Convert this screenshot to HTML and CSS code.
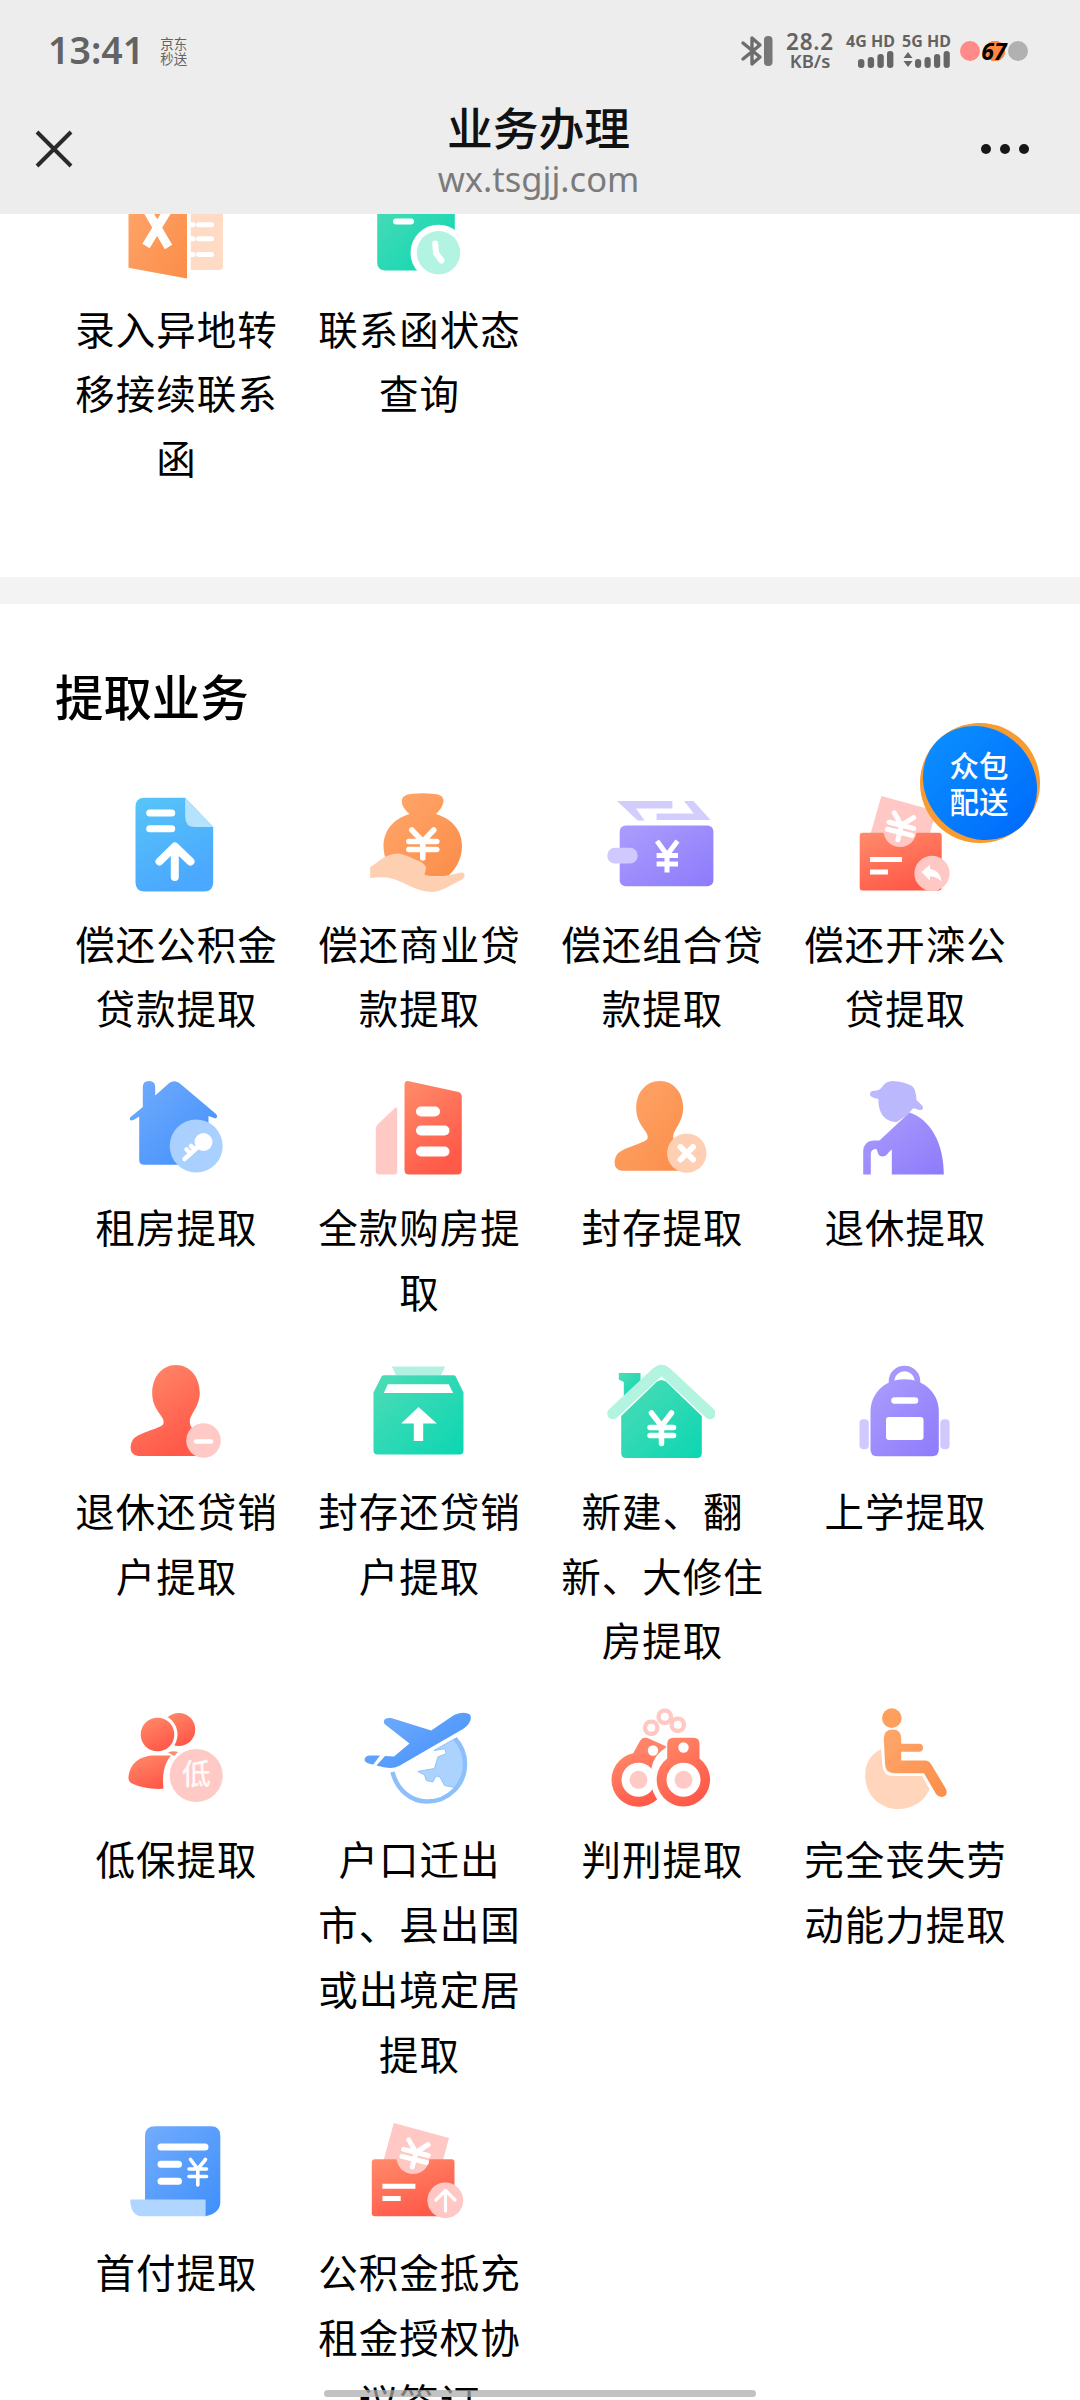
FILE: index.html
```html
<!DOCTYPE html>
<html lang="zh-CN">
<head>
  <meta charset="UTF-8">
  <meta name="viewport" content="width=device-width, initial-scale=1.0">
  <title>业务办理</title>
  <link rel="stylesheet" href="styles.css">
</head>
<body>
  <!-- 公共渐变和符号 -->
  <svg class="defs" width="0" height="0">
    <defs>
      <linearGradient id="orange" x1="0" y1="0" x2="1" y2="1"><stop offset="0" stop-color="#ffa76c"/><stop offset="1" stop-color="#fb8d49"/></linearGradient>
      <linearGradient id="green" x1="0" y1="0" x2="1" y2="1"><stop offset="0" stop-color="#4edcb6"/><stop offset="1" stop-color="#0bd6b2"/></linearGradient>
      <linearGradient id="sky" x1="0" y1="0" x2="0.4" y2="1"><stop offset="0" stop-color="#57c5f7"/><stop offset="1" stop-color="#4ba8ff"/></linearGradient>
      <linearGradient id="blue" x1="0" y1="0" x2="1" y2="1"><stop offset="0" stop-color="#72acfd"/><stop offset="1" stop-color="#3f8ffb"/></linearGradient>
      <linearGradient id="purple" x1="0" y1="0" x2="1" y2="1"><stop offset="0" stop-color="#aa9dfd"/><stop offset="1" stop-color="#8d7bfb"/></linearGradient>
      <linearGradient id="red" x1="0" y1="0" x2="0.5" y2="1"><stop offset="0" stop-color="#ff8c6c"/><stop offset="1" stop-color="#ff5a49"/></linearGradient>
      <symbol id="yen" viewBox="0 0 32 36" overflow="visible">
        <path d="M5 4 L16 15.5 L27 4 M16 15.5 V32 M2 15.5 H30 M2 23.5 H30" fill="none" stroke="#fff" stroke-width="5.500" stroke-linecap="round"/>
      </symbol>
    </defs>
  </svg>

  <header class="header">
    <div class="status-bar">
      <div class="status-left">
        <span class="time">13:41</span>
        <span class="notice">京东<br>秒送</span>
      </div>
      <div class="status-right">
        <svg class="bluetooth" width="34" height="34" viewBox="0 0 34 34">
          <path d="M3 9 L20 23 L12 30 V4 L20 11 L3 25" fill="none" stroke="#6d6d6d" stroke-width="3.400" stroke-linejoin="round" stroke-linecap="round"/>
          <rect x="24" y="2" width="8.500" height="30" rx="4" fill="#777"/>
        </svg>
        <div class="speed"><b>28.2</b><span>KB/s</span></div>
        <div class="signal">
          <span>4G HD</span>
          <svg width="48" height="17" viewBox="0 0 48 17" fill="#666">
            <rect x="12" y="8" width="6.400" height="9" rx="3"/><rect x="21.700" y="6" width="6.400" height="11" rx="3"/><rect x="31.400" y="3" width="6.400" height="14" rx="3"/><rect x="41" y="0" width="6.400" height="17" rx="3"/>
          </svg>
        </div>
        <div class="signal">
          <span>5G HD</span>
          <svg width="48" height="17" viewBox="0 0 48 17" fill="#666">
            <path d="M1.500 7 L6 1 L10.500 7 Z M1.500 10 L6 16 L10.500 10 Z"/>
            <rect x="13" y="8" width="6.200" height="9" rx="3"/><rect x="22.500" y="6" width="6.200" height="11" rx="3"/><rect x="32" y="3" width="6.200" height="14" rx="3"/><rect x="41.600" y="0" width="6.200" height="17" rx="3"/>
          </svg>
        </div>
        <div class="battery"><i class="dot-red"></i><span class="level">67</span><i class="dot-gray"></i></div>
      </div>
    </div>
    <div class="nav-bar">
      <svg class="close" width="38" height="38" viewBox="0 0 38 38"><path d="M2 2 L36 36 M36 2 L2 36" stroke="#2a2a2a" stroke-width="4"/></svg>
      <div class="nav-title">
        <h1>业务办理</h1>
        <p>wx.tsgjj.com</p>
      </div>
      <svg class="more" width="50" height="12" viewBox="0 0 50 12" fill="#171717"><circle cx="6" cy="6" r="5"/><circle cx="25" cy="6" r="5"/><circle cx="44" cy="6" r="5"/></svg>
    </div>
  </header>

  <main class="page">
    <section class="section transfer">
      <div class="grid">
        <a class="item">
          <svg class="icon" viewBox="0 0 108 108">
            <path d="M69.800 10 H98 Q102 10 102 14 V89 Q102 93 98 93 H69.800 Z" fill="#ffdac5"/>
            <path d="M69 47.700 h3 M77.500 47.700 h13 M69 61.700 h3 M77.500 61.700 h13 M69 77.400 h3 M77.500 77.400 h13" stroke="#fff" stroke-width="5" stroke-linecap="round"/>
            <path d="M7.500 14 L66 3 V101.500 L7.500 90.700 Z" fill="url(#orange)"/>
            <path d="M23 28 L47.500 70 M50 28 L25 69" stroke="#fff" stroke-width="8.500"/>
          </svg>
          <span class="label">录入异地转移接续联系函</span>
        </a>
        <a class="item">
          <svg class="icon" viewBox="0 0 108 108">
            <rect x="13.200" y="12" width="77.600" height="81.400" rx="7" fill="url(#green)"/>
            <path d="M32 44.400 H47" stroke="#fff" stroke-width="6" stroke-linecap="round"/>
            <circle cx="74.500" cy="75.700" r="28" fill="#fff"/>
            <circle cx="74.500" cy="75.700" r="21.700" fill="#b3f3e2"/>
            <path d="M71.200 66.500 L72 76 L77.500 83.500" fill="none" stroke="#fff" stroke-width="6" stroke-linecap="round" stroke-linejoin="round"/>
          </svg>
          <span class="label">联系函状态查询</span>
        </a>
      </div>
    </section>

    <section class="section withdraw">
      <h2>提取业务</h2>
      <div class="grid">
        <a class="item">
          <svg class="icon" viewBox="0 0 108 108">
            <path d="M23.500 5.700 H64.200 L92.200 35 V90.400 Q92.200 99.400 83.200 99.400 H23.500 Q14.500 99.400 14.500 90.400 V14.700 Q14.500 5.700 23.500 5.700 Z" fill="url(#sky)"/>
            <path d="M64.200 5.700 L92.200 35 H74 Q64.200 35 64.200 25 Z" fill="#b5e2fd"/>
            <path d="M28.700 21.100 H50.700 M28.700 36.700 H50.700" stroke="#fff" stroke-width="7" stroke-linecap="round"/>
            <path d="M53.800 85 V55 M38.500 69.500 L53.800 54.500 L69.500 69.500" fill="none" stroke="#fff" stroke-width="8" stroke-linecap="round" stroke-linejoin="round"/>
          </svg>
          <span class="label">偿还公积金贷款提取</span>
        </a>
        <a class="item">
          <svg class="icon" viewBox="0 0 108 108">
            <path d="M45.500 22 C40 17 37.800 13 37.800 9.500 C38 4 42 2.500 47 2 Q58.800 0.500 70 2 C76 2.500 79.500 4 79.500 9.500 C79 14 76 18 72 22 C88 27 98 38 98 54 C98 67 92 77 84 84 H38 C25 78 19.500 66 19.500 54 C19.500 39 29 27 45.500 22 Z" fill="url(#orange)"/>
            <path d="M6.200 75 C15 70 20 62 34 61.400 C42 62 49 67 55.500 69 C61 72 63 75 61.500 78 L60.500 83 C75 86 88 83 97 80.500 Q101 80 100.500 84 Q100 87 95 89 C85 94 77 100 67 100 C50 99 38 88 25.500 86 C18 84.500 12 86 6.200 86 Z" fill="#ffcfb2"/>
            <use href="#yen" x="42.800" y="34" width="32" height="36"/>
          </svg>
          <span class="label">偿还商业贷款提取</span>
        </a>
        <a class="item">
          <svg class="icon" viewBox="0 0 108 108">
            <path d="M10 9 H65.400 V16.400 H29 L37.500 28.400 H30.600 Z M77.100 9 H86.400 L103.600 28 H49.600 V21.400 H86.800 Z" fill="#d3cdfe"/>
            <rect x="12.700" y="33.400" width="93.700" height="60.800" rx="6" fill="url(#purple)"/>
            <rect x="0.300" y="55.700" width="30.300" height="15.700" rx="7.500" fill="#cfc9fe"/>
            <path d="M50 49 L60 63 L70.500 49 M60 62 V80.500 M49.600 63.500 H71 M49.600 72 H71" fill="none" stroke="#fff" stroke-width="5"/>
          </svg>
          <span class="label">偿还组合贷款提取</span>
        </a>
        <a class="item">
          <svg class="icon" viewBox="0 0 108 108">
            <path d="M31.400 4 L86 19 L80 41 H20.700 Z" fill="#ffc8c4"/>
            <rect x="9.700" y="40.700" width="82" height="57.700" rx="3" fill="url(#red)"/>
            <circle cx="50" cy="38.500" r="16.500" fill="#ffc8c4"/>
            <use href="#yen" x="36.500" y="19" width="29" height="33" transform="rotate(14 51 35)"/>
            <path d="M20 67.500 H52 M20 80 H38" stroke="#fff" stroke-width="5"/>
            <circle cx="82" cy="81.400" r="17.600" fill="#ffc8c4"/>
            <path d="M71.500 80 L80 72.500 V77 C87 78 90.500 82 91.500 89.500 C88 86 85 84.500 80 84.500 V88.500 Z" fill="#fff"/>
          </svg>
          <span class="label">偿还开滦公贷提取</span>
        </a>

        <a class="item">
          <svg class="icon" viewBox="0 0 108 108">
            <path d="M21.800 12 Q21.800 6 28 6 Q34.200 6 34.200 12 V20.500 L48.500 7.800 Q53.200 4.500 58 7.800 L95 39 Q97.500 42 94.500 43.500 L87.500 41 V89.800 H23 Q18.200 89.800 18.200 85 V41.500 L12.500 45 Q8 46.500 9 42.500 L21.800 32 Z" fill="url(#blue)"/>
            <circle cx="75.200" cy="71.100" r="26.500" fill="#a9d0fe"/>
            <circle cx="82.500" cy="67" r="9" fill="#fff"/>
            <path d="M78 71 L63.500 84 M69.500 78.500 L65.500 74.500 M74 74.500 L70 71" stroke="#fff" stroke-width="4.500" stroke-linecap="round"/>
          </svg>
          <span class="label">租房提取</span>
        </a>
        <a class="item">
          <svg class="icon" viewBox="0 0 108 108">
            <path d="M13 50 L31 33 Q33.200 31 33.200 34 V97 Q33.200 99.500 30.500 99.500 H15 Q11.800 99.500 11.800 96 V53 Z" fill="#ffcac5"/>
            <path d="M40.500 10 Q40.500 5 45 6.200 L94.500 17 Q97.800 18 97.800 22 V95 Q97.800 99.500 93.500 99.500 H45 Q40.500 99.500 40.500 95 Z" fill="url(#red)"/>
            <path d="M57 36.500 H71 M57 55.500 H80.500 M57 76.500 H80.500" stroke="#fff" stroke-width="10" stroke-linecap="round"/>
          </svg>
          <span class="label">全款购房提取</span>
        </a>
        <a class="item">
          <svg class="icon" viewBox="0 0 108 108">
            <path d="M52.800 6 C67 6 76.200 18 76.200 33 C76.200 44 70 51 66.500 59 C65 66 69 69 75 72 V95.800 H15 Q7.500 95 7.500 87 Q8 79 15 75.500 C24 71 33 69 39.800 64.800 C41 63 41 61 39.500 58 C34 50 29.200 44 29.200 33 C29.200 18 38.500 6 52.800 6 Z" fill="url(#orange)"/>
            <circle cx="79.800" cy="78.100" r="19.700" fill="#ffcfb4"/>
            <path d="M73.500 72 L86 84.500 M86 72 L73.500 84.500" stroke="#fff" stroke-width="6" stroke-linecap="round"/>
          </svg>
          <span class="label">封存提取</span>
        </a>
        <a class="item">
          <svg class="icon" viewBox="0 0 108 108">
            <path d="M20 19 Q20 16 24 15.800 Q30 15.500 32 12 Q36 6 42 6 Q54 6.500 62 11 Q66 14 66.500 25 L72.500 31 Q74.500 35.500 69 35 Q66 33 63 33.500 L57 40 L47 47 C34 47 28 37 28.500 24 Q19 22 20 19 Z" fill="#bcb8fe"/>
            <path d="M59.500 37.500 C80 44 94 68 93.800 99.500 H41.800 V74.500 C38 77 37 81.500 32.500 81.500 C28 81.500 28 77 26.500 74 Q20.800 74 20.800 79 V99.500 H13.200 V76 Q13.500 66 24 65.500 H29.500 Z" fill="url(#purple)"/>
          </svg>
          <span class="label">退休提取</span>
        </a>

        <a class="item">
          <svg class="icon" viewBox="0 0 108 108">
            <path d="M54.900 6 C69 6 78.800 18 78.800 34 C78.800 45 72 52 69 60 C68 67 71 70 77 73 V97 H17 Q9.500 96 9.500 88 Q10 80 17 76.500 C26 72 35 70 41.800 66 C43 64 43 62 41.500 59 C36 51 31.200 45 31.200 34 C31.200 18 41 6 54.900 6 Z" fill="url(#red)"/>
            <circle cx="82.500" cy="81.500" r="17.300" fill="#ffcac6"/>
            <path d="M75 82.500 H90" stroke="#fff" stroke-width="4.500" stroke-linecap="round"/>
          </svg>
          <span class="label">退休还贷销户提取</span>
        </a>
        <a class="item">
          <svg class="icon" viewBox="0 0 108 108">
            <path d="M27.800 7.500 H81.200 L77 16.200 H32 Z" fill="#b2f1e1"/>
            <path d="M20 16.200 H89.500 Q91 16.200 91.700 17.500 L99.500 33.500 V91.500 Q99.500 95.500 95.500 95.500 H13.500 Q9.500 95.500 9.500 91.500 V33.500 L17.500 17.500 Q18.500 16.200 20 16.200 Z" fill="url(#green)"/>
            <path d="M23.800 25.200 H84.800 L89.200 33.900 H19.800 Z M54.500 47.900 L72.800 64.500 H59.200 V82 H49.800 V64.500 H37.200 Z" fill="#fff"/>
          </svg>
          <span class="label">封存还贷销户提取</span>
        </a>
        <a class="item">
          <svg class="icon" viewBox="0 0 108 108">
            <path d="M11.800 13.900 H33.500 V24 L16.800 38 V23 L11.800 20.500 Z" fill="url(#green)"/>
            <path d="M14.200 57 L50 22.500 Q54.500 19.500 59 22.500 L94.800 57 V94 Q94.800 99 90 99 H19 Q14.200 99 14.200 94 Z" fill="url(#green)"/>
            <path d="M6 54.500 L50 13.500 Q54.500 9.500 59 13.500 L103 54.500" fill="none" stroke="#b2f4e0" stroke-width="11.500" stroke-linecap="round"/>
            <path d="M44.500 54 L54.500 67 L64.500 54 M54.500 67 V84.500 M43 68.500 H66.500 M43 76.500 H66.500" fill="none" stroke="#fff" stroke-width="5.500" stroke-linecap="round"/>
          </svg>
          <span class="label">新建、翻新、大修住房提取</span>
        </a>
        <a class="item">
          <svg class="icon" viewBox="0 0 108 108">
            <path d="M41.500 27 V22 A13 12.500 0 0 1 67.500 22 V27" fill="none" stroke="#a497fd" stroke-width="5.500"/>
            <rect x="9.500" y="60.200" width="9.300" height="30" rx="4" fill="#cfc9fe"/>
            <rect x="90.300" y="60.200" width="9.300" height="30" rx="4" fill="#cfc9fe"/>
            <path d="M20.500 52 C21 33 36 20.200 54.600 20.200 C73 20.200 88.500 33 88.800 52 V90.500 Q88.800 97.200 82 97.200 H27 Q20.500 97.200 20.500 90.500 Z" fill="url(#purple)"/>
            <path d="M44.500 41.500 H65" stroke="#fff" stroke-width="6.500" stroke-linecap="round"/>
            <rect x="36" y="58" width="37.500" height="23" rx="3" fill="#fff"/>
          </svg>
          <span class="label">上学提取</span>
        </a>

        <a class="item">
          <svg class="icon" viewBox="0 0 108 108">
            <circle cx="57.800" cy="22.500" r="16.500" fill="url(#red)"/>
            <circle cx="36.500" cy="27.500" r="20" fill="#fff"/>
            <circle cx="36.500" cy="27.500" r="16.800" fill="url(#red)"/>
            <path d="M47 45.500 Q52 43.500 57 45 L53 49 Z" fill="#ff8a70"/>
            <path d="M7.500 70 C9 56 19 48.500 34 48.500 H50 C43 57 41 68 42.500 81.800 C30 82.500 18 80 10 76 Q7 74 7.500 70 Z" fill="url(#red)"/>
            <circle cx="75.200" cy="68.500" r="26.500" fill="#ffcac6"/>
            <text class="badge-text" x="75.200" y="78">低</text>
          </svg>
          <span class="label">低保提取</span>
        </a>
        <a class="item">
          <svg class="icon" viewBox="0 0 108 108">
            <path d="M91 31.500 Q100 41 101.500 54 Q102 69 91 80.500 L80.500 78.500 L76 70 L72.200 69 L68.800 75 L62.200 73.500 L60.500 67.800 L53.800 64.500 L70.500 61.500 L73.800 50 L82 46.800 L81 41.800 L70 43.500 Z" fill="#acd3fd" stroke="#92c2fb" stroke-width="1"/>
            <path d="M28.500 65 C33 83 47 94.500 63 94.500 C85 94.500 101 77 101 57 C101 47 97 38 91 31.500" fill="none" stroke="#8dbffb" stroke-width="4.500"/>
            <path d="M20.500 17 C18 12 23 10.500 28 11.200 L67.200 23.500 L90 8 Q100 4 106 7.500 C108.500 12 105 18 99 22 L35 59 Q27 63 12.500 58.500 L21 49 L30 49.500 L45.500 36.500 Z" fill="url(#blue)"/>
            <path d="M0.500 53 Q1 48 7 48.500 H16.500 L10.500 57.800 Q1 56.500 0.500 53 Z" fill="#5da2fc"/>
            <path d="M9.500 59 L17.500 48" stroke="#fff" stroke-width="2"/>
          </svg>
          <span class="label">户口迁出市、县出国或出境定居提取</span>
        </a>
        <a class="item">
          <svg class="icon" viewBox="0 0 108 108">
            <g fill="none" stroke="#ffc8c3" stroke-width="4.400">
              <circle cx="44.200" cy="20.800" r="6.200"/><circle cx="57.800" cy="9.800" r="6.200"/><circle cx="70.800" cy="17.800" r="6.200"/>
            </g>
            <path d="M25.500 47.500 L33 34 Q35.500 29.500 40.500 31 L59.500 39.500 L44 62 Z" fill="#ff8368"/>
            <circle cx="31.500" cy="72.800" r="27" fill="url(#red)"/>
            <circle cx="46" cy="43.500" r="5.200" fill="#fff"/>
            <circle cx="31.500" cy="72.800" r="17" fill="#fff"/>
            <circle cx="31.500" cy="72.800" r="9" fill="#ffcac6"/>
            <path d="M62 39 C48 46 43 57 44 72 Q44 87 53 95 L60 92 Z" fill="#fff"/>
            <path d="M60.200 37 Q60.200 30.800 66.500 30.800 H86.500 Q92.500 30.800 92.500 37 V51.500 A26.700 26.700 0 1 1 60.200 51.500 Z" fill="url(#red)"/>
            <circle cx="76.500" cy="40.500" r="5.200" fill="#fff"/>
            <circle cx="76.500" cy="72.800" r="17" fill="#fff"/>
            <circle cx="76.500" cy="72.800" r="9" fill="#ffcac6"/>
          </svg>
          <span class="label">判刑提取</span>
        </a>
        <a class="item">
          <svg class="icon" viewBox="0 0 108 108">
            <path d="M31 42 C18 49 14 60 15.500 73 C18 92 33 102 48 102 C63 102 75 94 79.500 82 L72 69 H44 Q33 69 32.500 59 Z" fill="#ffd5bc"/>
            <circle cx="41.800" cy="11.100" r="9.800" fill="#ff9f5e"/>
            <path d="M33.800 31 Q34 22.500 42.500 22.500 Q51.200 22.500 51.200 31 V36.800 H69 Q73 37 73 40.800 Q73 44.800 69 44.800 H51.200 V53.500 H75 Q79 53.500 81 57 L96 82 Q98 88 94 89.500 Q89 91 86 87 L74 66.200 H44 Q35.500 66 35 57 Z" fill="url(#orange)"/>
          </svg>
          <span class="label">完全丧失劳动能力提取</span>
        </a>

        <a class="item">
          <svg class="icon" viewBox="0 0 108 108">
            <path d="M34 6.300 H90 Q99.300 6.300 99.300 16 V82 Q99.300 93 84.600 96.300 L24 82 V16 Q24 6.300 34 6.300 Z" fill="url(#blue)"/>
            <path d="M9.300 79.600 H84.600 V96.300 H20 Q9.300 95 9.300 79.600 Z" fill="#b0d5ff"/>
            <path d="M40 27 H84 M40 44.300 H57.500 M40 61.300 H57.500" stroke="#fff" stroke-width="7" stroke-linecap="round"/>
            <path d="M69.500 39.500 L76.800 49 L84.500 39.500 M76.800 49 V65 M68 49 H85.500 M68 56.500 H85.500" fill="none" stroke="#fff" stroke-width="3.600" stroke-linecap="round"/>
          </svg>
          <span class="label">首付提取</span>
        </a>
        <a class="item">
          <svg class="icon" viewBox="0 0 108 108">
            <path d="M29.800 3 L85 18 L79 40 H19.700 Z" fill="#ffc8c4"/>
            <rect x="7.800" y="39.300" width="82.700" height="57" rx="3" fill="url(#red)"/>
            <circle cx="49.100" cy="37.500" r="16.500" fill="#ffc8c4"/>
            <use href="#yen" x="37" y="18" width="29" height="33" transform="rotate(14 51 34)"/>
            <path d="M18.400 66.300 H51.400 M18.400 78.600 H36.700" stroke="#fff" stroke-width="5"/>
            <circle cx="81.300" cy="80.300" r="17.900" fill="#ffc8c4"/>
            <path d="M81.500 91 V71 M72 80 L81.500 70.500 L91 80" fill="none" stroke="#fff" stroke-width="3.200" stroke-linecap="round" stroke-linejoin="round"/>
          </svg>
          <span class="label">公积金抵充租金授权协议签订</span>
        </a>
      </div>
    </section>
  </main>

  <div class="float-ball">
    <span>众包<br>配送</span>
  </div>
  <div class="home-bar"></div>
</body>
</html>
```

FILE: styles.css
```css
* {
  box-sizing: border-box;
}
body {
  margin: 0;
  width: 1080px;
  height: 2400px;
  overflow: hidden;
  position: relative;
  background-color: #fff;
  color: #000;
  font-family: "Noto Sans", "Noto Sans CJK SC", sans-serif;
}
h1, h2, p {
  margin: 0;
}
.defs {
  position: absolute;
}

/* 顶部 */
.header {
  position: relative;
  z-index: 2;
  height: 214px;
  background-color: #ededed;
}
.status-bar {
  display: flex;
  justify-content: space-between;
  height: 100px;
  padding: 0 52px 0 48px;
  color: #636363;
}
.status-left {
  display: flex;
  align-items: center;
  gap: 16px;
  height: 100px;
}
.time {
  font-size: 37.5px;
  font-weight: 600;
  line-height: 40px;
}
.notice {
  padding-top: 2px;
  font-family: "Noto Sans CJK SC", sans-serif;
  font-size: 13.5px;
  line-height: 15px;
}
.status-right {
  display: flex;
  align-items: center;
  height: 102px;
}
.speed {
  display: flex;
  flex-direction: column;
  align-items: center;
  width: 50px;
  margin: 0 11px;
  font-weight: 600;
}
.speed b {
  font-size: 22.5px;
  font-weight: 600;
  line-height: 19px;
  letter-spacing: 0.8px;
}
.speed span {
  font-size: 18.5px;
  line-height: 19px;
}
.signal {
  display: flex;
  flex-direction: column;
  gap: 3px;
  width: 48px;
  height: 34px;
  margin-right: 8px;
}
.signal span {
  font-size: 16px;
  font-weight: 700;
  line-height: 14px;
  white-space: nowrap;
}
.battery {
  display: flex;
  align-items: center;
  margin-left: 2px;
}
.battery i {
  width: 20px;
  height: 20px;
  border-radius: 50%;
}
.dot-red {
  background-color: #ff8a88;
}
.dot-gray {
  background-color: #b1b1b1;
}
.level {
  width: 28px;
  font-size: 23px;
  font-style: italic;
  font-weight: 700;
  line-height: 22px;
  text-align: center;
  color: #000;
  background: radial-gradient(circle at 15px 11px, #ff8540 10px, transparent 10.5px);
}
.nav-bar {
  display: flex;
  justify-content: space-between;
  align-items: center;
  height: 98px;
  padding: 0 50px 0 35px;
}
.nav-title {
  margin-left: 24px;
  padding-top: 3px;
  text-align: center;
}
.nav-title h1 {
  font-family: "Noto Sans CJK SC", sans-serif;
  font-size: 45.8px;
  font-weight: 500;
  line-height: 56px;
  color: #111;
}
.nav-title p {
  font-size: 34.5px;
  line-height: 49px;
  color: #7b7b7b;
}

/* 业务列表 */
.page {
  height: 2186px;
  overflow: hidden;
}
.section {
  display: flow-root;
  padding: 0 54px;
}
.transfer {
  height: 390px;
  border-bottom: 27px solid #f3f3f3;
}
.transfer .grid {
  margin-top: -37.4px;
}
.withdraw h2 {
  height: 187.6px;
  padding-left: 1px;
  font-family: "Noto Sans CJK SC", sans-serif;
  font-size: 48.4px;
  font-weight: 500;
  line-height: 183px;
}
.grid {
  display: grid;
  grid-template-columns: repeat(4, 243px);
}
.item {
  display: flex;
  flex-direction: column;
  align-items: center;
  padding-bottom: 35px;
}
.icon {
  width: 108px;
  height: 108px;
  margin: 0 1px 11px 0;
}
.label {
  width: 216px;
  padding-left: 2px;
  font-family: "Noto Sans CJK SC", sans-serif;
  font-size: 39.5px;
  line-height: 64.8px;
  letter-spacing: 1px;
  text-align: center;
}
.badge-text {
  font-family: "Noto Sans CJK SC", sans-serif;
  font-size: 29px;
  font-weight: 500;
  text-anchor: middle;
  fill: #fff;
  fill-opacity: 0.9;
}

/* 悬浮球 */
.float-ball {
  position: absolute;
  z-index: 3;
  top: 723px;
  left: 920px;
  display: flex;
  justify-content: center;
  align-items: center;
  width: 120px;
  height: 120px;
  border-radius: 50%;
  background-color: #f89c32;
}
.float-ball::before {
  content: "";
  position: absolute;
  top: 6px;
  left: 0;
  width: 120px;
  height: 108px;
  border-radius: 50%;
  background: linear-gradient(90deg, #0a8cff, #006efd);
  transform: rotate(45deg);
}
.float-ball span {
  position: relative;
  padding: 0 2px 3px 0;
  font-family: "Noto Sans CJK SC", sans-serif;
  font-size: 29.5px;
  font-weight: 500;
  line-height: 36px;
  color: #fff;
}
.home-bar {
  position: absolute;
  z-index: 3;
  left: 324px;
  bottom: 3px;
  width: 432px;
  height: 7px;
  border-radius: 4px;
  background-color: rgba(170, 170, 170, 0.72);
}
```
